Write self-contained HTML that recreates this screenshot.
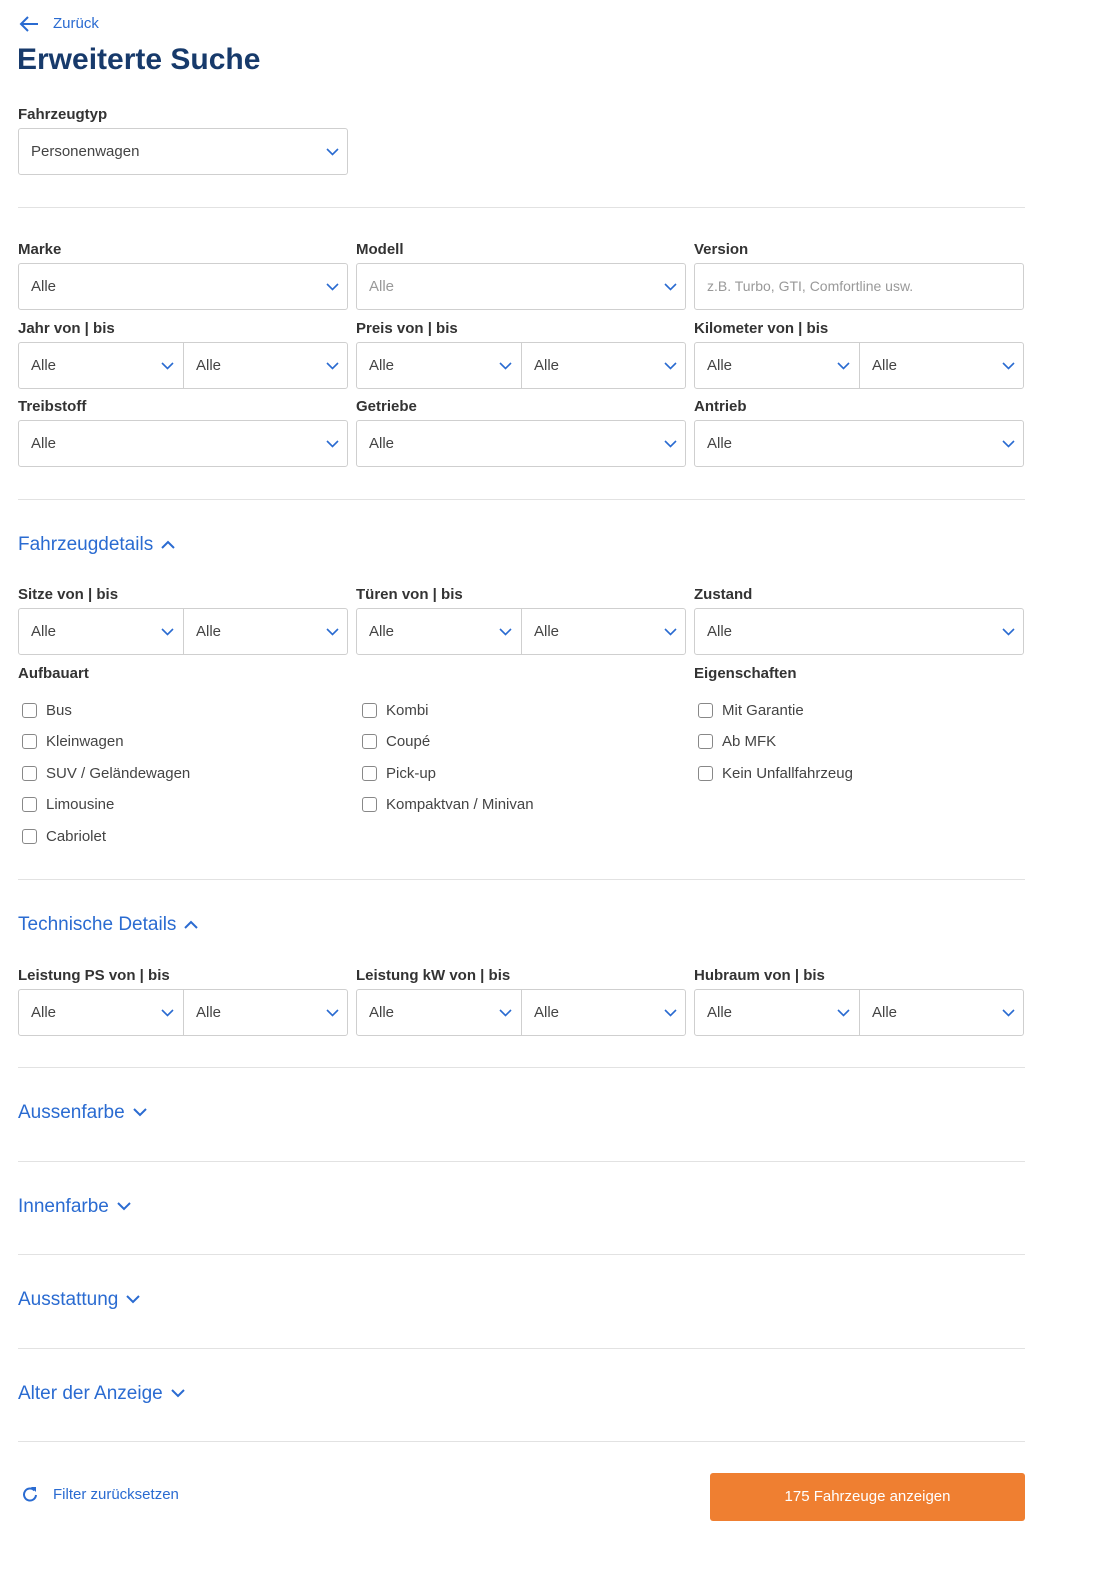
<!DOCTYPE html>
<html><head><meta charset="utf-8"><style>
*{box-sizing:border-box;margin:0;padding:0}
body{width:1106px;height:1594px;background:#fff;font-family:"Liberation Sans",sans-serif;color:#333;position:relative;overflow:hidden}
.a{position:absolute}
.l{position:absolute;font-size:15px;font-weight:bold;color:#333;line-height:18px}
.s{position:absolute;height:47px;width:330px;border:1px solid #cfcfcf;border-radius:3px;font-size:15px;color:#444}
.s span{position:absolute;left:12px;top:14px}
.s.g span{color:#999}
.s svg{position:absolute;top:19px}
.h{position:absolute;border-left:1px solid #cfcfcf;top:0;bottom:0;left:164px}
.d{position:absolute;left:18px;width:1007px;height:1px;background:#e2e2e2}
.t{position:absolute;left:18px;font-size:19px;color:#2a6bd1;line-height:22px}
.t svg{vertical-align:middle;margin-left:8px}
.c{position:absolute;font-size:15px;color:#444;line-height:18px;padding-left:24px}
.c:before{content:"";position:absolute;left:0;top:1px;width:13px;height:13px;border:1px solid #888;border-radius:3px}
</style></head><body>
<svg class="a" style="left:19px;top:15px" width="20" height="18" viewBox="0 0 20 18"><path d="M19 9H2M9 2L2 9l7 7" fill="none" stroke="#2a6bd1" stroke-width="2"/></svg>
<div class="a" style="left:53px;top:15px;font-size:15px;color:#2a6bd1">Zurück</div>
<div class="a" style="left:17px;top:43px;font-size:30px;font-weight:bold;color:#173a6b">Erweiterte Suche</div>

<div class="l" style="left:18px;top:106px">Fahrzeugtyp</div>
<div class="s" style="left:18px;top:128px"><span>Personenwagen</span><svg style="left:307px" width="13" height="8"><path d="M1 1l5.5 5.5L12 1" fill="none" stroke="#2a6bd1" stroke-width="1.6"/></svg></div>
<div class="d" style="top:207px"></div>

<div class="l" style="left:18px;top:241px">Marke</div>
<div class="l" style="left:356px;top:241px">Modell</div>
<div class="l" style="left:694px;top:241px">Version</div>
<div class="s" style="left:18px;top:263px"><span>Alle</span><svg style="left:307px" width="13" height="8"><path d="M1 1l5.5 5.5L12 1" fill="none" stroke="#2a6bd1" stroke-width="1.6"/></svg></div>
<div class="s g" style="left:356px;top:263px"><span>Alle</span><svg style="left:307px" width="13" height="8"><path d="M1 1l5.5 5.5L12 1" fill="none" stroke="#2a6bd1" stroke-width="1.6"/></svg></div>
<div class="s g" style="left:694px;top:263px"><span style="font-size:14px">z.B. Turbo, GTI, Comfortline usw.</span></div>

<div class="l" style="left:18px;top:320px">Jahr von | bis</div>
<div class="l" style="left:356px;top:320px">Preis von | bis</div>
<div class="l" style="left:694px;top:320px">Kilometer von | bis</div>
<div class="s" style="left:18px;top:342px"><span>Alle</span><span style="left:177px">Alle</span><div class="h"></div><svg style="left:142px" width="13" height="8"><path d="M1 1l5.5 5.5L12 1" fill="none" stroke="#2a6bd1" stroke-width="1.6"/></svg><svg style="left:307px" width="13" height="8"><path d="M1 1l5.5 5.5L12 1" fill="none" stroke="#2a6bd1" stroke-width="1.6"/></svg></div>
<div class="s" style="left:356px;top:342px"><span>Alle</span><span style="left:177px">Alle</span><div class="h"></div><svg style="left:142px" width="13" height="8"><path d="M1 1l5.5 5.5L12 1" fill="none" stroke="#2a6bd1" stroke-width="1.6"/></svg><svg style="left:307px" width="13" height="8"><path d="M1 1l5.5 5.5L12 1" fill="none" stroke="#2a6bd1" stroke-width="1.6"/></svg></div>
<div class="s" style="left:694px;top:342px"><span>Alle</span><span style="left:177px">Alle</span><div class="h"></div><svg style="left:142px" width="13" height="8"><path d="M1 1l5.5 5.5L12 1" fill="none" stroke="#2a6bd1" stroke-width="1.6"/></svg><svg style="left:307px" width="13" height="8"><path d="M1 1l5.5 5.5L12 1" fill="none" stroke="#2a6bd1" stroke-width="1.6"/></svg></div>

<div class="l" style="left:18px;top:398px">Treibstoff</div>
<div class="l" style="left:356px;top:398px">Getriebe</div>
<div class="l" style="left:694px;top:398px">Antrieb</div>
<div class="s" style="left:18px;top:420px"><span>Alle</span><svg style="left:307px" width="13" height="8"><path d="M1 1l5.5 5.5L12 1" fill="none" stroke="#2a6bd1" stroke-width="1.6"/></svg></div>
<div class="s" style="left:356px;top:420px"><span>Alle</span><svg style="left:307px" width="13" height="8"><path d="M1 1l5.5 5.5L12 1" fill="none" stroke="#2a6bd1" stroke-width="1.6"/></svg></div>
<div class="s" style="left:694px;top:420px"><span>Alle</span><svg style="left:307px" width="13" height="8"><path d="M1 1l5.5 5.5L12 1" fill="none" stroke="#2a6bd1" stroke-width="1.6"/></svg></div>
<div class="d" style="top:499px"></div>

<div class="t" style="top:534px">Fahrzeugdetails<svg width="14" height="9"><path d="M1 8l6-6 6 6" fill="none" stroke="#2a6bd1" stroke-width="2"/></svg></div>

<div class="l" style="left:18px;top:586px">Sitze von | bis</div>
<div class="l" style="left:356px;top:586px">Türen von | bis</div>
<div class="l" style="left:694px;top:586px">Zustand</div>
<div class="s" style="left:18px;top:608px"><span>Alle</span><span style="left:177px">Alle</span><div class="h"></div><svg style="left:142px" width="13" height="8"><path d="M1 1l5.5 5.5L12 1" fill="none" stroke="#2a6bd1" stroke-width="1.6"/></svg><svg style="left:307px" width="13" height="8"><path d="M1 1l5.5 5.5L12 1" fill="none" stroke="#2a6bd1" stroke-width="1.6"/></svg></div>
<div class="s" style="left:356px;top:608px"><span>Alle</span><span style="left:177px">Alle</span><div class="h"></div><svg style="left:142px" width="13" height="8"><path d="M1 1l5.5 5.5L12 1" fill="none" stroke="#2a6bd1" stroke-width="1.6"/></svg><svg style="left:307px" width="13" height="8"><path d="M1 1l5.5 5.5L12 1" fill="none" stroke="#2a6bd1" stroke-width="1.6"/></svg></div>
<div class="s" style="left:694px;top:608px"><span>Alle</span><svg style="left:307px" width="13" height="8"><path d="M1 1l5.5 5.5L12 1" fill="none" stroke="#2a6bd1" stroke-width="1.6"/></svg></div>

<div class="l" style="left:18px;top:665px">Aufbauart</div>
<div class="l" style="left:694px;top:665px">Eigenschaften</div>
<div class="c" style="left:22px;top:702px">Bus</div>
<div class="c" style="left:22px;top:733px">Kleinwagen</div>
<div class="c" style="left:22px;top:765px">SUV / Geländewagen</div>
<div class="c" style="left:22px;top:796px">Limousine</div>
<div class="c" style="left:22px;top:828px">Cabriolet</div>
<div class="c" style="left:362px;top:702px">Kombi</div>
<div class="c" style="left:362px;top:733px">Coupé</div>
<div class="c" style="left:362px;top:765px">Pick-up</div>
<div class="c" style="left:362px;top:796px">Kompaktvan / Minivan</div>
<div class="c" style="left:698px;top:702px">Mit Garantie</div>
<div class="c" style="left:698px;top:733px">Ab MFK</div>
<div class="c" style="left:698px;top:765px">Kein Unfallfahrzeug</div>
<div class="d" style="top:879px"></div>

<div class="t" style="top:914px">Technische Details<svg width="14" height="9"><path d="M1 8l6-6 6 6" fill="none" stroke="#2a6bd1" stroke-width="2"/></svg></div>
<div class="l" style="left:18px;top:967px">Leistung PS von | bis</div>
<div class="l" style="left:356px;top:967px">Leistung kW von | bis</div>
<div class="l" style="left:694px;top:967px">Hubraum von | bis</div>
<div class="s" style="left:18px;top:989px"><span>Alle</span><span style="left:177px">Alle</span><div class="h"></div><svg style="left:142px" width="13" height="8"><path d="M1 1l5.5 5.5L12 1" fill="none" stroke="#2a6bd1" stroke-width="1.6"/></svg><svg style="left:307px" width="13" height="8"><path d="M1 1l5.5 5.5L12 1" fill="none" stroke="#2a6bd1" stroke-width="1.6"/></svg></div>
<div class="s" style="left:356px;top:989px"><span>Alle</span><span style="left:177px">Alle</span><div class="h"></div><svg style="left:142px" width="13" height="8"><path d="M1 1l5.5 5.5L12 1" fill="none" stroke="#2a6bd1" stroke-width="1.6"/></svg><svg style="left:307px" width="13" height="8"><path d="M1 1l5.5 5.5L12 1" fill="none" stroke="#2a6bd1" stroke-width="1.6"/></svg></div>
<div class="s" style="left:694px;top:989px"><span>Alle</span><span style="left:177px">Alle</span><div class="h"></div><svg style="left:142px" width="13" height="8"><path d="M1 1l5.5 5.5L12 1" fill="none" stroke="#2a6bd1" stroke-width="1.6"/></svg><svg style="left:307px" width="13" height="8"><path d="M1 1l5.5 5.5L12 1" fill="none" stroke="#2a6bd1" stroke-width="1.6"/></svg></div>
<div class="d" style="top:1067px"></div>

<div class="t" style="top:1102px">Aussenfarbe<svg width="14" height="9"><path d="M1 1l6 6 6-6" fill="none" stroke="#2a6bd1" stroke-width="2"/></svg></div>
<div class="d" style="top:1161px"></div>
<div class="t" style="top:1196px">Innenfarbe<svg width="14" height="9"><path d="M1 1l6 6 6-6" fill="none" stroke="#2a6bd1" stroke-width="2"/></svg></div>
<div class="d" style="top:1254px"></div>
<div class="t" style="top:1289px">Ausstattung<svg width="14" height="9"><path d="M1 1l6 6 6-6" fill="none" stroke="#2a6bd1" stroke-width="2"/></svg></div>
<div class="d" style="top:1348px"></div>
<div class="t" style="top:1383px">Alter der Anzeige<svg width="14" height="9"><path d="M1 1l6 6 6-6" fill="none" stroke="#2a6bd1" stroke-width="2"/></svg></div>
<div class="d" style="top:1441px"></div>

<svg class="a" style="left:22px;top:1486px" width="16" height="16" viewBox="0 0 16 16"><path d="M12.5 4.5A6 6 0 1 0 14 9" fill="none" stroke="#2a6bd1" stroke-width="2"/><path d="M9 1h5v5z" fill="#2a6bd1"/></svg>
<div class="a" style="left:53px;top:1486px;font-size:15px;color:#2a6bd1">Filter zurücksetzen</div>
<div class="a" style="left:710px;top:1473px;width:315px;height:48px;background:#ef7f31;border-radius:3px;color:#fff;font-size:15px;text-align:center;line-height:48px">175 Fahrzeuge anzeigen</div>
</body></html>
